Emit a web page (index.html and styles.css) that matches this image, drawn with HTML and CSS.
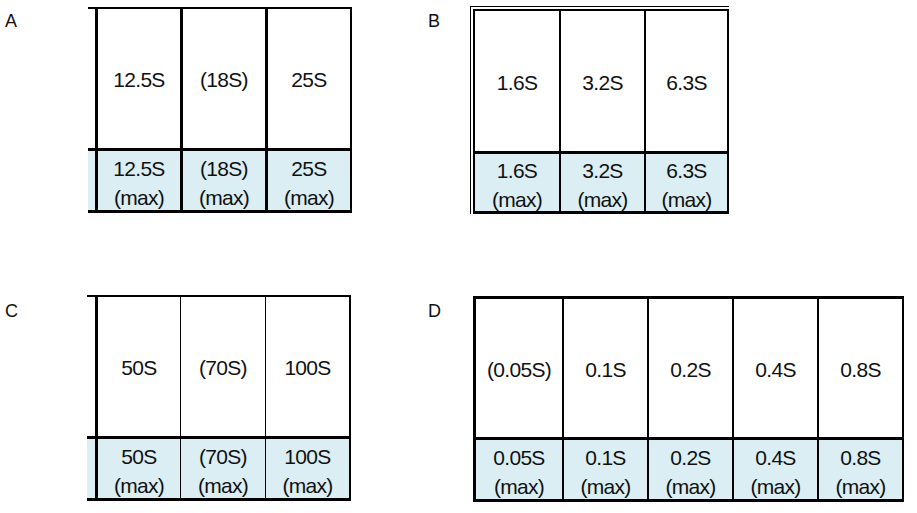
FILE: index.html
```html
<!DOCTYPE html>
<html lang="en">
<head>
<meta charset="utf-8">
<title>Ranges</title>
<link rel="stylesheet" href="styles.css">
</head>
<body>
<div class="page">
  <section class="quad quad-a">
    <div class="label">A</div>
    <div class="sheet sheet-a">
      <div class="cell hi stub"></div>
      <div class="cell hi first">12.5S</div>
      <div class="cell hi">(18S)</div>
      <div class="cell hi last">25S</div>
      <div class="cell lo stub"></div>
      <div class="cell lo first">12.5S<br>(max)</div>
      <div class="cell lo">(18S)<br>(max)</div>
      <div class="cell lo last">25S<br>(max)</div>
    </div>
  </section>

  <section class="quad quad-b">
    <div class="label">B</div>
    <div class="double">
      <div class="sheet sheet-b">
        <div class="cell hi first">1.6S</div>
        <div class="cell hi">3.2S</div>
        <div class="cell hi last">6.3S</div>
        <div class="cell lo first">1.6S<br>(max)</div>
        <div class="cell lo">3.2S<br>(max)</div>
        <div class="cell lo last">6.3S<br>(max)</div>
      </div>
    </div>
  </section>

  <section class="quad quad-c">
    <div class="label">C</div>
    <div class="sheet sheet-c">
      <div class="cell hi stub"></div>
      <div class="cell hi first">50S</div>
      <div class="cell hi">(70S)</div>
      <div class="cell hi last">100S</div>
      <div class="cell lo stub"></div>
      <div class="cell lo first">50S<br>(max)</div>
      <div class="cell lo">(70S)<br>(max)</div>
      <div class="cell lo last">100S<br>(max)</div>
    </div>
  </section>

  <section class="quad quad-d">
    <div class="label">D</div>
    <div class="sheet sheet-d">
      <div class="cell hi first">(0.05S)</div>
      <div class="cell hi">0.1S</div>
      <div class="cell hi">0.2S</div>
      <div class="cell hi">0.4S</div>
      <div class="cell hi last">0.8S</div>
      <div class="cell lo first">0.05S<br>(max)</div>
      <div class="cell lo">0.1S<br>(max)</div>
      <div class="cell lo">0.2S<br>(max)</div>
      <div class="cell lo">0.4S<br>(max)</div>
      <div class="cell lo last">0.8S<br>(max)</div>
    </div>
  </section>
</div>
</body>
</html>
```

FILE: styles.css
```css
* { box-sizing: border-box; }

html, body {
  margin: 0;
  padding: 0;
  background: #ffffff;
}

body {
  font-family: "Liberation Sans", Arial, sans-serif;
  color: #000000;
}

.page {
  display: grid;
  grid-template-columns: 420px 497px;
  grid-template-rows: 285px 228px;
  width: 917px;
  height: 513px;
}

.quad {
  display: flex;
  align-items: flex-start;
}

.label {
  font-size: 18px;
  line-height: 18px;
  flex: none;
  color: #111;
}

.quad-a .label { width: 88px; padding-left: 5px; padding-top: 12px; }
.quad-b .label { width: 50px; padding-left: 8px; padding-top: 12px; }
.quad-c .label { width: 87px; padding-left: 5px; padding-top: 17px; }
.quad-d .label { width: 53px; padding-left: 8px; padding-top: 17px; }

.sheet {
  display: grid;
  flex: none;
}

.cell {
  display: flex;
  align-items: center;
  justify-content: center;
  text-align: center;
  font-size: 21px;
  letter-spacing: -0.7px;
  color: #111;
  border-left: 2px solid #000;
  border-top: 2px solid #000;
}

.cell.hi {
  line-height: 22px;
  padding-top: 3px;
  background: #ffffff;
}

.cell.lo {
  line-height: 29px;
  padding-top: 4px;
  background: #daeef3;
  border-top-width: 3px;
  border-bottom: 3px solid #000;
}

.cell.stub {
  border-left: none;
}

.cell.last {
  border-right: 2px solid #000;
}

/* A */
.sheet-a {
  margin-top: 7px;
  grid-template-columns: 7px 85px 85px 87px;
  grid-template-rows: 141px 65px;
}
.sheet-a .cell:not(.stub) { border-left-width: 3px; }

/* B */
.double {
  flex: none;
  margin-top: 6px;
  border-top: 1px solid #000;
  border-left: 1px solid #000;
  padding-top: 2px;
  padding-left: 2px;
}
.sheet-b {
  grid-template-columns: 86px 85px 85px;
  grid-template-rows: 142px 63px;
}
.sheet-b .cell.first { border-left-width: 2px; }

/* C */
.sheet-c {
  margin-top: 10px;
  grid-template-columns: 8px 85px 85px 86px;
  grid-template-rows: 141px 65px;
}
.sheet-c .cell { border-left-width: 1px; }
.sheet-c .cell.stub { border-left: none; }
.sheet-c .cell.first { border-left-width: 3px; }

/* D */
.sheet-d {
  margin-top: 11px;
  grid-template-columns: 89px 85px 85px 85px 87px;
  grid-template-rows: 141px 65px;
}
.sheet-d .cell.hi { border-top-width: 3px; }
.sheet-d .cell.first { border-left-width: 3px; }
```
